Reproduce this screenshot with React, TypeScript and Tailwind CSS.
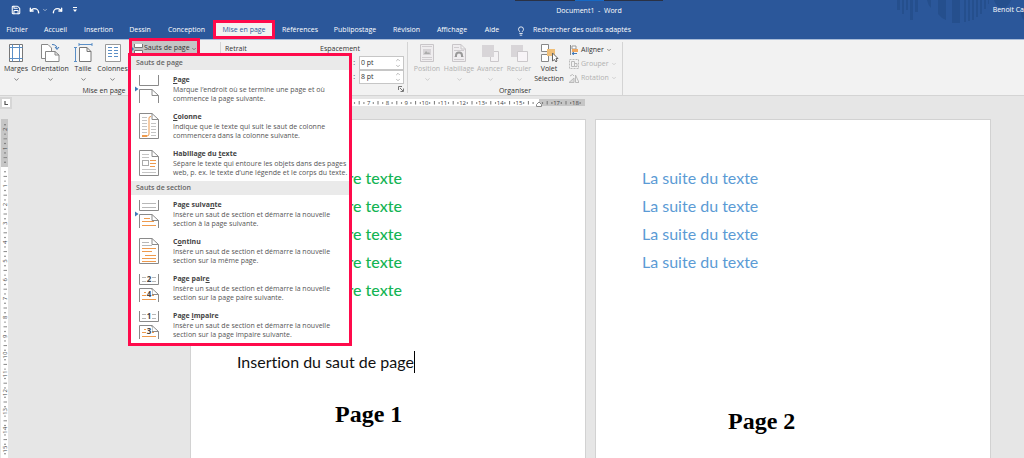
import type { ReactNode } from 'react';
import { ChevronDown, ChevronUp, Lightbulb, Redo, Save, Undo } from 'lucide-react';

const tabs = [
  { label: 'Fichier', width: 'w-[34px]' },
  { label: 'Accueil', width: 'w-[43px]' },
  { label: 'Insertion', width: 'w-[43px]' },
  { label: 'Dessin', width: 'w-10' },
  { label: 'Conception', width: 'w-[53px]' },
  { label: 'Mise en page', width: 'w-[62px]', active: true },
  { label: 'Références', width: 'w-[50px]' },
  { label: 'Publipostage', width: 'w-[60px]' },
  { label: 'Révision', width: 'w-[43px]' },
  { label: 'Affichage', width: 'w-12' },
  { label: 'Aide', width: 'w-8' },
];

const GREY = '#8a8a8a';
const ORANGE = '#ee9a4d';

/* ---------- menu drawings ---------- */

function Arrow() {
  return <path d="M0 11.5L3.5 14L0 16.5Z" fill="#3f78b8" />;
}

function TopHalf() {
  return <path d="M4.5 0V10.5H23.5V0" fill="none" stroke={GREY} />;
}

function BottomHalf() {
  return <path d="M4.5 28V14.5H17L23.5 20.5V28M17 14.5V20.5H23.5" fill="none" stroke={GREY} />;
}

function FullPage() {
  return <path d="M4.5 1.5H17L23.5 7.5V26.5H4.5ZM17 1.5V7.5H23.5" fill="#fff" stroke={GREY} />;
}

function MenuIcon({ children }: { children: ReactNode }) {
  return (
    <svg viewBox="0 0 24 28" className="h-7 w-6 shrink-0" aria-hidden="true">
      {children}
    </svg>
  );
}

function SectionPageIcon({ top, bottom }: { top?: string; bottom?: string }) {
  return (
    <MenuIcon>
      {!top && <Arrow />}
      <TopHalf />
      <BottomHalf />
      <path d="M7 3.5H21M7 7.5H21" stroke="#b8b8b8" />
      <path d="M9 18.5H15M7 21.5H19M7 25.5H21" stroke={ORANGE} />
      {top && (
        <>
          <rect x="11" y="1" width="6" height="9" fill="#fff" />
          <rect x="11" y="16" width="6" height="8" fill="#fff" />
          <text x="14" y="8" fontSize="8" fontWeight="700" textAnchor="middle" fill="#444">{top}</text>
          <text x="14" y="23" fontSize="8" fontWeight="700" textAnchor="middle" fill="#444">{bottom}</text>
        </>
      )}
    </MenuIcon>
  );
}

const pageBreaks = [
  {
    title: <><u>P</u>age</>,
    lines: ['Marque l’endroit où se termine une page et où', 'commence la page suivante.'],
    icon: <MenuIcon><Arrow /><TopHalf /><BottomHalf /></MenuIcon>,
  },
  {
    title: <><u>C</u>olonne</>,
    lines: ['Indique que le texte qui suit le saut de colonne', 'commencera dans la colonne suivante.'],
    icon: (
      <MenuIcon>
        <FullPage />
        <path d="M7 5.5H12M7 8.5H12M7 11.5H12M7 14.5H12M7 17.5H12M7 20.5H12M16 11.5H21M16 14.5H21M16 17.5H21M16 20.5H21M16 23.5H21" stroke="#c4c4c4" />
        <path d="M7 24H12Q14 24 14 22V6Q14 4.5 16 4.5" fill="none" stroke={ORANGE} />
        <path d="M7 24H12" stroke={ORANGE} strokeWidth="2" />
      </MenuIcon>
    ),
  },
  {
    title: <>Habillage du <u>t</u>exte</>,
    lines: ['Sépare le texte qui entoure les objets dans des pages', 'web, p. ex. le texte d’une légende et le corps du texte.'],
    icon: (
      <MenuIcon>
        <FullPage />
        <path d="M7 5.5H14M7 8.5H14M7 20.5H21M7 23.5H21" stroke="#c4c4c4" />
        <rect x="7.5" y="11.5" width="6" height="5" fill="none" stroke="#aaa" />
        <path d="M15 11.5H21M15 14.5H21M15 17.5H20" stroke={ORANGE} />
      </MenuIcon>
    ),
  },
];

const sectionBreaks = [
  {
    title: <>Page suiva<u>n</u>te</>,
    lines: ['Insère un saut de section et démarre la nouvelle', 'section à la page suivante.'],
    icon: <SectionPageIcon />,
  },
  {
    title: <>C<u>o</u>ntinu</>,
    lines: ['Insère un saut de section et démarre la nouvelle', 'section sur la même page.'],
    icon: (
      <MenuIcon>
        <FullPage />
        <path d="M7 5.5H14M7 8.5H17" stroke="#b8b8b8" />
        <path d="M7 11.5H21M7 14.5H17M10 18.5H21M7 21.5H21M7 24.5H21" stroke={ORANGE} />
      </MenuIcon>
    ),
  },
  {
    title: <>Page pair<u>e</u></>,
    lines: ['Insère un saut de section et démarre la nouvelle', 'section sur la page paire suivante.'],
    icon: <SectionPageIcon top="2" bottom="4" />,
  },
  {
    title: <>Page <u>i</u>mpaire</>,
    lines: ['Insère un saut de section et démarre la nouvelle', 'section sur la page impaire suivante.'],
    icon: <SectionPageIcon top="1" bottom="3" />,
  },
];

type BreakItem = (typeof pageBreaks)[number];

function MenuSection({ heading, items }: { heading: string; items: BreakItem[] }) {
  return (
    <section>
      <h3 className="h-[14px] bg-[#eaeaea] pl-[5px] leading-[14px] font-semibold text-[#666]">{heading}</h3>
      {items.map((item, i) => (
        <button key={i} type="button" role="menuitem" className="flex h-[37px] w-full items-center gap-[14px] pl-1 text-left">
          {item.icon}
          <span className="leading-[9px] whitespace-nowrap text-[#555]">
            <span className="block leading-[11px] font-bold text-[#444]">{item.title}</span>
            {item.lines.map((line) => (
              <span key={line} className="block">{line}</span>
            ))}
          </span>
        </button>
      ))}
    </section>
  );
}

/* ---------- ribbon ---------- */

function BigButton({ label, width, disabled, children }: { label: string; width: string; disabled?: boolean; children: ReactNode }) {
  return (
    <button
      type="button"
      disabled={disabled}
      className={`flex flex-col items-center leading-[10px] ${width} ${disabled ? 'text-[#b1b1b1]' : 'text-[#333]'}`}
    >
      <svg viewBox="0 0 20 20" className="mb-[1px] h-5 w-5" fill="none" aria-hidden="true">
        {children}
      </svg>
      <span>{label}</span>
      {label !== 'Volet Sélection' && <ChevronDown className="mt-[2px] h-[7px] w-[7px]" />}
    </button>
  );
}

function SmallButton({ label, disabled, children }: { label: string; disabled?: boolean; children: ReactNode }) {
  return (
    <button type="button" disabled={disabled} className={`flex h-[14px] items-center gap-[2px] ${disabled ? 'text-[#b1b1b1]' : 'text-[#333]'}`}>
      <svg viewBox="0 0 10 10" className="h-[10px] w-[10px]" fill="none" aria-hidden="true">
        {children}
      </svg>
      {label}
      <ChevronDown className="h-[6px] w-[6px]" />
    </button>
  );
}

function GroupLabel({ children }: { children: ReactNode }) {
  return <p className="text-center leading-[8px] text-[#333]">{children}</p>;
}

function SpacingField({ id, label, value }: { id: string; label: string; value: string }) {
  return (
    <div className="flex items-center justify-end gap-1">
      <label htmlFor={id}>{label}</label>
      <div className="flex h-[14px] w-[45px] items-center border border-[#c6c6c6] bg-white pr-[2px]">
        <input id={id} defaultValue={value} className="w-full min-w-0 pl-[1px] text-[#333] outline-none" />
        <span className="flex flex-col text-[#777]">
          <ChevronUp className="h-[6px] w-[6px]" />
          <ChevronDown className="h-[6px] w-[6px]" />
        </span>
      </div>
    </div>
  );
}

function Ribbon() {
  return (
    <div className="flex h-[57px] border-t border-b border-t-[#a9bcd8] border-b-[#d4d4d4] bg-[#f2f2f2]">
      <div className="relative flex w-[220px] shrink-0 flex-col justify-between pt-[3px]">
        <div className="flex">
          <BigButton label="Marges" width="w-8">
            <path d="M3.5 1.5H16.5V18.5H3.5Z" fill="#fff" stroke="#777" />
            <path d="M6.5 1.5V18.5M13.5 1.5V18.5M3.5 4.5H16.5M3.5 15.5H16.5" stroke="#5b8fc7" />
          </BigButton>
          <BigButton label="Orientation" width="w-9">
            <path d="M1.5 1.5H8L11.5 5V15.5H1.5Z" fill="#fff" stroke="#888" />
            <path d="M5.5 8.5H15L19 12V18.5H5.5ZM15 8.5V12H19" fill="#fff" stroke="#888" />
            <path d="M12 1.5Q17 1.5 17 6M15 4L17 6.5L19 4" stroke="#3f78b8" />
          </BigButton>
          <BigButton label="Taille" width="w-[30px]">
            <path d="M6.5 4.5H14L18 8.5V18.5H6.5ZM14 4.5V8.5H18" fill="#fff" stroke="#777" />
            <path d="M6 1.5H19M6 0V3M19 0V3M2.5 4V19M1 4.5H4M1 18.5H4" stroke="#5b8fc7" />
          </BigButton>
          <BigButton label="Colonnes" width="w-[29px]">
            <path d="M2.5 1.5H17.5V18.5H2.5Z" fill="#fff" stroke="#999" />
            <path d="M5 4.5H9M5 7.5H9M5 10.5H9M5 13.5H9M11 4.5H15M11 7.5H15M11 10.5H15M11 13.5H15" stroke="#5b8fc7" />
          </BigButton>
        </div>
        <div className="pr-3">
          <GroupLabel>Mise en page</GroupLabel>
        </div>

        {/* Breaks button with its open menu */}
        <div className="absolute -top-[2px] left-[129px] z-10">
          <button
            type="button"
            aria-haspopup="menu"
            aria-expanded="true"
            className="flex h-[19px] w-[71px] items-center gap-[1px] border-3 border-[#ff0a4b] bg-[#c5c5c5] pt-[2px] whitespace-nowrap text-[#333]"
          >
            <svg viewBox="0 0 11 12" className="h-3 w-[11px] shrink-0" fill="none" aria-hidden="true">
              <path d="M2.5 1V4.5H10.5V1M2.5 11V7.5H10.5V11" fill="#fff" stroke="#777" />
              <path d="M0 4L2 6L0 8Z" fill="#3f78b8" />
            </svg>
            Sauts de page
            <ChevronDown className="h-[6px] w-[6px] shrink-0" />
          </button>
          <div role="menu" className="absolute top-[15px] -left-[1px] w-[224px] border-3 border-[#ff0a4b] bg-white">
            <MenuSection heading="Sauts de page" items={pageBreaks} />
            <MenuSection heading="Sauts de section" items={sectionBreaks} />
          </div>
        </div>
      </div>

      <div className="my-[2px] flex w-[188px] shrink-0 flex-col border-x border-[#d4d4d4] pr-[3px] text-[#333]">
        <div className="flex h-[14px] items-center">
          <span className="w-[95px] pl-1">Retrait</span>
          <span className="pl-1">Espacement</span>
        </div>
        <SpacingField id="before" label="Avant :" value="0 pt" />
        <SpacingField id="after" label="Après :" value="8 pt" />
        <button type="button" aria-label="Paramètres de paragraphe" className="mt-auto mb-[1px] self-end">
          <svg viewBox="0 0 6 6" className="h-[6px] w-[6px]" fill="none" stroke="#777" aria-hidden="true">
            <path d="M.5 4V.5H4M2 2L5 5M5.5 2.5V5.5H2.5" />
          </svg>
        </button>
      </div>

      <div className="mt-[2px] flex w-[215px] shrink-0 flex-col justify-between border-r border-[#d4d4d4] pt-[1px]">
        <div className="flex pl-[3px]">
          <BigButton label="Position" width="w-8" disabled>
            <path d="M3.5 1.5H16.5V18.5H3.5Z" fill="#efedef" stroke="#c9c6c9" />
            <path d="M6 6H14V12H6Z" fill="#d6d3d6" />
            <path d="M7 11L9 8L11 10L12 9L13 11Z" fill="#aaa" />
            <path d="M5 3.5H15M5 14.5H15M5 16.5H15" stroke="#d0cdd0" />
          </BigButton>
          <BigButton label="Habillage" width="w-8" disabled>
            <path d="M3.5 1.5H12L16.5 6V18.5H3.5ZM12 1.5V6H16.5" fill="#efedef" stroke="#c9c6c9" />
            <path d="M5 4.5H10M5 7.5H15M5 16.5H15M5 13.5H6M14 13.5H15" stroke="#cfcccf" />
            <path d="M7 14V12.5A3 3 0 0 1 13 12.5V14" stroke="#999" strokeWidth="2" />
          </BigButton>
          <BigButton label="Avancer" width="w-[30px]" disabled>
            <path d="M10.5 8.5H18.5V18.5H10.5Z" fill="#f4f2f4" stroke="#cbc8cb" />
            <path d="M2 2H14V14H2Z" fill="#d8d5d8" />
          </BigButton>
          <BigButton label="Reculer" width="w-7" disabled>
            <path d="M2 2H14V14H2Z" fill="#d8d5d8" />
            <path d="M8.5 8.5H18.5V18.5H8.5Z" fill="#f7f4f7" stroke="#cbc8cb" />
          </BigButton>
          <BigButton label="Volet Sélection" width="w-8">
            <path d="M2.5 1.5H9.5V8.5H2.5ZM2.5 11.5H9.5V18.5H2.5Z" fill="#fff" stroke="#888" />
            <path d="M8 6H16V13H8Z" fill="#f0bf78" />
            <path d="M13.5 10V18L15.5 16.5L17 19L18 18L17 15.5H19Z" fill="#fff" stroke="#666" />
          </BigButton>
          <div className="ml-1 flex flex-col">
            <SmallButton label="Aligner">
              <path d="M1.5 0V10" stroke="#888" />
              <path d="M3 1H7V4H3Z" fill="#fff" stroke="#999" />
              <path d="M3 4H9V7H3Z" fill="#f0a860" />
              <path d="M8 8.5H3M5 7L3 8.5L5 10" stroke="#3f78b8" />
            </SmallButton>
            <SmallButton label="Grouper" disabled>
              <path d="M.5 .5H9.5V9.5H.5Z" stroke="#bbb" strokeDasharray="2 1" />
              <path d="M2.5 2.5H5.5V7.5H2.5ZM5.5 4.5H8V7.5H5.5" stroke="#bbb" />
            </SmallButton>
            <SmallButton label="Rotation" disabled>
              <path d="M0 9.5H5V5Z" fill="#ddd" stroke="#bbb" />
              <path d="M6.5 9.5V2L10 9.5ZM1 3Q4 0 5 3" stroke="#bbb" />
            </SmallButton>
          </div>
        </div>
        <GroupLabel>Organiser</GroupLabel>
      </div>
    </div>
  );
}

/* ---------- rulers: one centimetre is 18.8 units ---------- */

const CM = 18.8;

function RulerMarks({ from, to }: { from: number; to: number }) {
  const marks: ReactNode[] = [];
  for (let q = from * 4; q <= to * 4; q++) {
    if (q === 0) continue;
    const at = (q / 4) * CM;
    if (q % 4 === 0) {
      marks.push(
        <text key={q} x={at} y="7" fontSize="6" textAnchor="middle" fill="#444">{Math.abs(q / 4)}</text>
      );
    } else if (q % 2 === 0) {
      marks.push(<path key={q} d={`M${at} 3V6.5`} stroke="#777" strokeWidth="1" />);
    } else {
      marks.push(<circle key={q} cx={at} cy="5" r=".7" fill="#555" />);
    }
  }
  return <>{marks}</>;
}

function HorizontalRuler() {
  return (
    <svg width="394" height="9" className="shrink-0" aria-hidden="true">
      <rect y="1" width="394" height="7" fill="#c6c6c6" />
      <rect x="46" y="1" width="302" height="7" fill="#fff" />
      <g transform="translate(46 0)">
        {/* the open menu covers everything before 6 cm */}
        <RulerMarks from={6.25} to={15.75} />
        <g transform="translate(302 0)">
          <path d="M-2.5 8.5V6.5L0 4L2.5 6.5V8.5Z" fill="#fff" stroke="#888" />
        </g>
        <RulerMarks from={16.25} to={18.25} />
      </g>
    </svg>
  );
}

function VerticalRuler() {
  return (
    <svg width="8" height="340" className="shrink-0" aria-hidden="true">
      <rect x="1" width="7" height="48" fill="#c6c6c6" />
      <rect x="1" y="48" width="7" height="292" fill="#fff" />
      {/* numbers read bottom to top */}
      {Array.from({ length: 71 }, (_, i) => i - 9).map((q) => {
        const y = 48 + (q / 4) * CM;
        if (q === 0) return null;
        if (q % 4 === 0) {
          return (
            <text key={q} transform={`translate(7 ${y}) rotate(-90)`} fontSize="6" textAnchor="middle" fill="#444">
              {Math.abs(q / 4)}
            </text>
          );
        }
        return q % 2 === 0
          ? <path key={q} d={`M3.5 ${y}H7`} stroke="#888" />
          : <circle key={q} cx="5" cy={y} r=".7" fill="#555" />;
      })}
    </svg>
  );
}

function TitleBar() {
  return (
    <div className="relative flex h-5 items-center text-white">
      {/* darker artwork behind the account name */}
      <svg width="130" height="24" className="absolute top-0 right-0" fill="#254f8d" aria-hidden="true">
        <path d="M3 0H6V10H3ZM8 0H10V14H8ZM12 0H14V10H12ZM16 0H19V20H16ZM21 0H24V12H21Z" />
        <path d="M33 0H37V8Q34 5 33 0ZM44 0H52V20Q47 18 44 14ZM58 0H66V23H58ZM70 0H72V22H70ZM74 0H76V21H74ZM78 0H80V20H78ZM82 0H84V17H82ZM86 0H88V14H86ZM90 0H92V9H90ZM94 0H95V4H94Z" />
        <path d="M100 0H117Q115 7 108 8Q102 7 100 0ZM127 12H130V20Q127 17 127 12Z" />
      </svg>
      <div className="flex flex-1 items-center pl-[11px]">
        <button type="button" aria-label="Enregistrer"><Save className="h-[10px] w-[10px]" strokeWidth={2.5} /></button>
        <button type="button" aria-label="Annuler" className="ml-2"><Undo className="h-[11px] w-[11px]" strokeWidth={3} /></button>
        <button type="button" aria-label="Liste des annulations" className="ml-[2px]"><ChevronDown className="h-[6px] w-[6px]" /></button>
        <button type="button" aria-label="Rétablir" className="ml-1"><Redo className="h-[11px] w-[11px]" strokeWidth={3} /></button>
        <button type="button" aria-label="Personnaliser la barre d’accès rapide" className="ml-[9px]">
          <svg viewBox="0 0 6 6" className="h-[6px] w-[6px]" aria-hidden="true">
            <path d="M1 .5H5" stroke="#fff" />
            <path d="M1 2.5H5L3 5Z" fill="#fff" />
          </svg>
        </button>
      </div>
      <div className="flex w-[148px] flex-col items-center self-stretch">
        <div className="flex h-[1px] w-full justify-center bg-[#2a3144]">
          <span className="w-[29px] bg-[#1769c4]" />
        </div>
        <h1 className="leading-[19px] whitespace-pre">Document1  -  Word</h1>
      </div>
      <div className="relative flex w-[361px] justify-end">
        <span className="whitespace-nowrap">Benoit Ca</span>
      </div>
    </div>
  );
}

export default function App() {
  return (
    <div className="flex h-screen flex-col overflow-hidden bg-[#e6e6e6] font-['Open_Sans','Noto_Sans',sans-serif] text-[7px]">
      <header className="bg-[#2b579a]">
        <TitleBar />
        <nav className="flex h-[19px] items-stretch text-white">
          {tabs.map((tab) => (
            <button
              key={tab.label}
              type="button"
              className={`shrink-0 pt-[2px] whitespace-nowrap ${tab.width} ${tab.active ? 'border-3 border-[#ff0a4b] bg-[#f2f2f2] text-[#2b579a]' : 'text-white'}`}
            >
              {tab.label}
            </button>
          ))}
          <button type="button" className="ml-2 flex items-center gap-[7px] pt-[2px] whitespace-nowrap">
            <Lightbulb className="h-[10px] w-[10px]" />
            Rechercher des outils adaptés
          </button>
        </nav>
      </header>

      <Ribbon />

      <main className="flex min-h-0 flex-1 flex-col">
        <div className="flex h-[23px] shrink-0 gap-[179px] pt-[1px]">
          <button type="button" aria-label="Tabulation gauche" className="h-3 w-3 border-2 border-[#d6d6d6] bg-white">
            <svg viewBox="0 0 8 8" className="h-2 w-2" aria-hidden="true">
              <path d="M3 2V5.5H6" fill="none" stroke="#555" strokeWidth="1.2" />
            </svg>
          </button>
          <div className="pt-[1px]">
            <HorizontalRuler />
          </div>
        </div>

        <div className="flex min-h-0 flex-1 gap-[182px]">
          <VerticalRuler />
          <div className="flex gap-[9px] font-[Lato,sans-serif] text-[16px] leading-7 [font-variant-ligatures:none]">
            <article className="flex w-[396px] shrink-0 flex-col border border-b-0 border-[#d2d2d2] bg-white pt-11 pl-[46px]">
              <div className="w-[165px] text-right font-medium text-[#14b453]">
                {[1, 2, 3, 4, 5].map((n) => (
                  <p key={n}>Voici notre texte</p>
                ))}
              </div>
              <p className="mt-11 flex items-center whitespace-nowrap text-[#111]">
                Insertion du saut de page
                <span className="h-[22px] w-[1px] bg-black" />
              </p>
              <p className="mt-6 pl-[98px] font-['Liberation_Serif',serif] text-2xl leading-7 font-bold text-black">Page 1</p>
            </article>
            <article className="flex w-[396px] shrink-0 flex-col border border-b-0 border-[#d2d2d2] bg-white pt-11 pl-[46px]">
              <div className="text-[#5b9bd5]">
                {[1, 2, 3, 4].map((n) => (
                  <p key={n}>La suite du texte</p>
                ))}
              </div>
              <p className="mt-[131px] pl-[86px] font-['Liberation_Serif',serif] text-2xl leading-7 font-bold text-black">Page 2</p>
            </article>
          </div>
        </div>
      </main>
    </div>
  );
}
